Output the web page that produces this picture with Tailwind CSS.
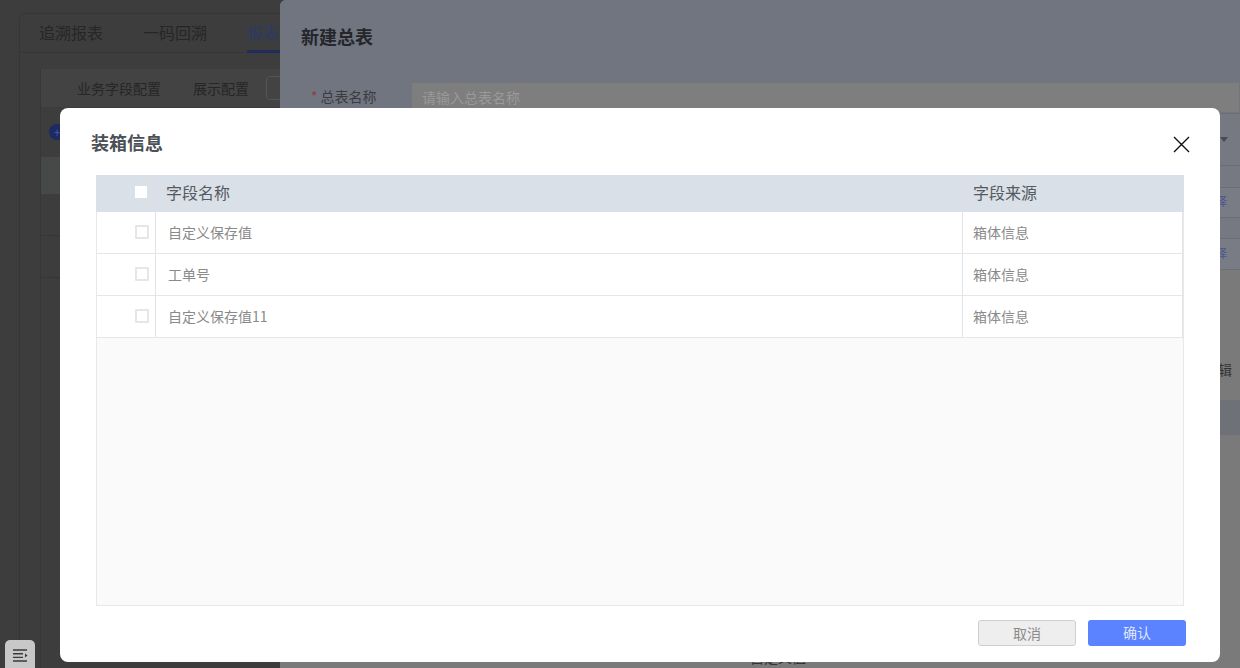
<!DOCTYPE html>
<html lang="zh-CN">

<head>
  <meta charset="UTF-8">
  <title>装箱信息</title>
  <script src="https://cdn.jsdelivr.net/npm/@tailwindcss/browser@4"></script>
</head>

<body class="bg-[#3d3d3d] font-['Noto_Sans_CJK_SC','Noto_Sans',sans-serif] overflow-hidden">
  <div class="relative w-[1240px] h-[668px] overflow-hidden bg-[#3d3d3d]">

    <!-- page behind the drawer -->
    <div class="pt-[13px] pl-[19px] h-full">
      <div class="h-full border-l border-t border-[#363636] rounded-tl-md">
        <div class="h-[39px] flex items-start pl-[19px] border-b border-[#363636] text-[16px] leading-[37px] text-[#262626]">
          <span class="w-[104px]">追溯报表</span>
          <span class="w-[104px]">一码回溯</span>
          <span class="h-[39px] w-[60px] text-[#2b3a66] border-b-[3px] border-[#1f2c5e]">报表</span>
        </div>
        <div class="ml-5 h-full border-l border-[#373737]">
          <div class="mt-4 h-[38px] bg-[#434343] flex items-center pl-[36px] text-[14px] text-[#262626]">
            <span class="w-[116px]">业务字段配置</span>
            <span class="w-[73px]">展示配置</span>
            <span class="w-4 h-6 border border-[#555] rounded-sm"></span>
          </div>
          <div class="h-[50px] flex items-center pl-[8px]">
            <span class="w-4 h-4 rounded-full bg-[#1c2b66] flex items-center justify-center text-[12px] leading-none text-[#4a5a90]">+</span>
          </div>
          <div class="h-[37px] bg-[#474848]"></div>
          <div class="h-[42px] border-b border-[#363636]"></div>
          <div class="h-[42px] border-b border-[#363636]"></div>
        </div>
      </div>
    </div>

    <!-- drawer: 新建总表 -->
    <div class="absolute left-[280px] top-0 w-[960px] h-[668px] rounded-tl-md bg-[#7a7a7a] overflow-hidden">
      <div class="h-[83px] bg-[#71757f] pl-[21px] pt-[22px]">
        <h2 class="text-[18px] leading-7 font-semibold text-[#24262b]">新建总表</h2>
      </div>
      <div class="h-[30px] bg-[#71757f] flex items-start">
        <div class="w-[131px] pl-[31px] pt-[1px] text-[14px] leading-6 text-[#3a3c42]"><span class="text-[#8f3c3c] mr-[3px]">*</span>总表名称</div>
        <div class="flex-1 h-[31px] -mt-px bg-[#7e7e7e] border border-[#74767a] pl-[10px] pt-[2px] text-[14px] leading-6 text-[#9a9a98]">请输入总表名称</div>
      </div>
      <!-- only the right hand end of these rows shows past the modal -->
      <div class="flex flex-col items-end">
        <div class="w-[20px] h-[52px] bg-[#767982] border-t border-[#6c6e75] flex items-center justify-end pr-[12px]">
          <span class="w-0 h-0 border-x-[4px] border-x-transparent border-t-[5px] border-t-[#4a4a4a]"></span>
        </div>
        <div class="w-[20px] h-[22px] bg-[#767982] border-t border-[#6c6e75]"></div>
        <div class="w-[20px] h-[30px] bg-[#7a7c85] border-t border-[#6c6e75] -indent-[5px] text-[12px] leading-[26px] text-[#4a5590]">择</div>
        <div class="w-[20px] h-[21px] bg-[#767982] border-t border-[#6c6e75]"></div>
        <div class="w-[20px] h-[32px] bg-[#7a7c85] border-y border-[#6c6e75] -indent-[5px] text-[12px] leading-[28px] text-[#4a5590]">择</div>
        <div class="w-[20px] h-[130px] bg-[#7a7a7a]"></div>
        <div class="w-[20px] h-[35px] bg-[#6e7178]"></div>
      </div>
    </div>
    <span class="absolute left-[1218px] top-[359px] text-[14px] leading-5 text-[#333]">辑</span>
    <span class="absolute left-[750px] top-[647px] text-[14px] leading-5 text-[#333]">自定义值</span>

    <!-- modal: 装箱信息 -->
    <div class="absolute left-[60px] top-[108px] w-[1160px] h-[554px] bg-white rounded-lg flex flex-col pl-9 pr-9">
      <div class="h-[67px] flex items-start justify-between -ml-[5px] pt-5">
        <h3 class="text-[18px] leading-7 font-semibold text-[#4b5056]">装箱信息</h3>
        <svg class="mt-2 -mr-[6px]" width="17" height="17" viewBox="0 0 17 17" fill="none" stroke="#111" stroke-width="1.4">
          <path d="M1 1 16 16M16 1 1 16" />
        </svg>
      </div>

      <div class="h-[431px] border border-[#e8e8e8] bg-[#fafafa] text-[14px]">
        <div class="h-[37px] -mt-px -mx-px bg-[#dae0e8] flex items-center text-[16px] text-[#555a60] pb-1">
          <div class="w-[70px] pl-[39px] pt-px">
            <div class="w-[12px] h-[12px] bg-white"></div>
          </div>
          <div class="w-[807px]">字段名称</div>
          <div>字段来源</div>
        </div>
        <!-- rows -->
        <div class="h-[42px] bg-white border-b border-[#e4e6ea] flex text-[#8a8a8a]">
          <div class="w-[59px] border-r border-[#e0e3e8] pl-[38px] pt-[13px]">
            <div class="w-[14px] h-[14px] border-2 border-[#e6e6e6] rounded-[1px]"></div>
          </div>
          <div class="w-[807px] border-r border-[#e0e3e8] pl-3 leading-[40px]">自定义保存值</div>
          <div class="flex-1 pl-[10px] leading-[40px] border-r border-[#e0e3e8]">箱体信息</div>
        </div>
        <div class="h-[42px] bg-white border-b border-[#e4e6ea] flex text-[#8a8a8a]">
          <div class="w-[59px] border-r border-[#e0e3e8] pl-[38px] pt-[13px]">
            <div class="w-[14px] h-[14px] border-2 border-[#e6e6e6] rounded-[1px]"></div>
          </div>
          <div class="w-[807px] border-r border-[#e0e3e8] pl-3 leading-[40px]">工单号</div>
          <div class="flex-1 pl-[10px] leading-[40px] border-r border-[#e0e3e8]">箱体信息</div>
        </div>
        <div class="h-[42px] bg-white border-b border-[#e4e6ea] flex text-[#8a8a8a]">
          <div class="w-[59px] border-r border-[#e0e3e8] pl-[38px] pt-[13px]">
            <div class="w-[14px] h-[14px] border-2 border-[#e6e6e6] rounded-[1px]"></div>
          </div>
          <div class="w-[807px] border-r border-[#e0e3e8] pl-3 leading-[40px]">自定义保存值11</div>
          <div class="flex-1 pl-[10px] leading-[40px] border-r border-[#e0e3e8]">箱体信息</div>
        </div>
      </div>

      <div class="flex justify-end gap-3 mt-[14px] -mr-[2px] text-[14px]">
        <button class="w-[98px] h-[26px] bg-[#efeeee] border border-[#cfcfcf] rounded-[3px] text-[#8a8a8a] leading-6 pb-[2px]">取消</button>
        <button class="w-[98px] h-[26px] bg-[#5b82ff] rounded-[3px] text-[#dfe7ff] leading-6 pb-[2px]">确认</button>
      </div>
    </div>

    <!-- floating menu button -->
    <div class="absolute left-[5px] top-[640px] w-[30px] h-[28px] bg-[#c8c8c8] rounded-t-[5px] flex justify-center pt-[9px]">
      <svg width="16" height="13" viewBox="0 0 16 13" fill="none" stroke="#3a3a3a" stroke-width="1.4">
        <path d="M1 1H15M1 4.7H11M1 8.4H11M1 12H15" />
        <path d="M13 4.6 15.5 6.5 13 8.4Z" fill="#3a3a3a" stroke="none" />
      </svg>
    </div>
  </div>
</body>

</html>
